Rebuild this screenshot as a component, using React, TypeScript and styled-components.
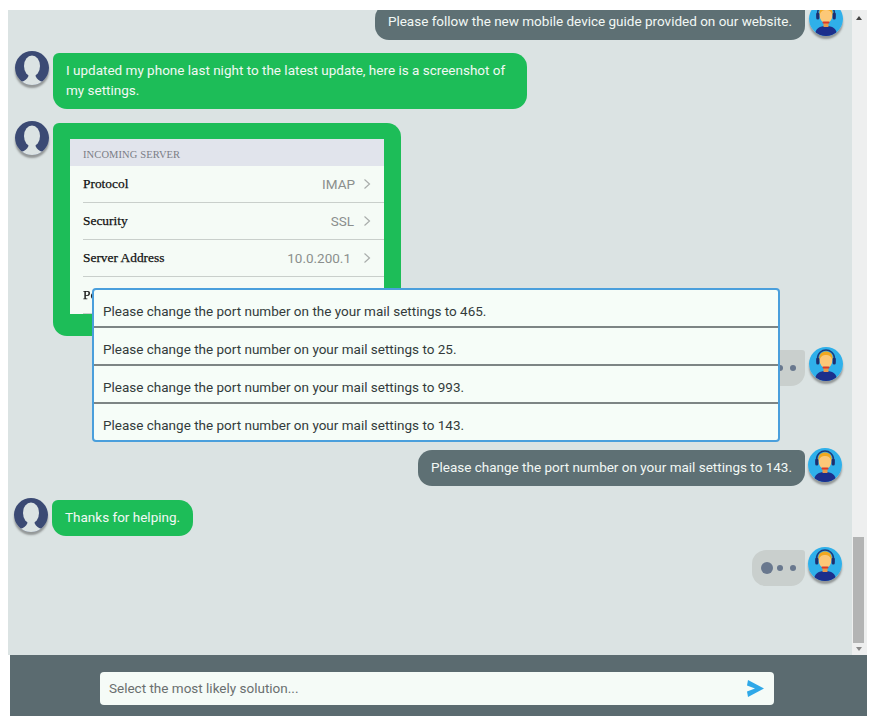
import React from "react";
import styled, { createGlobalStyle } from "styled-components";

const Global = createGlobalStyle`
  html, body { margin: 0; padding: 0; background: #fff; }
  body { font-family: Roboto, "Liberation Sans", sans-serif; }
  * { box-sizing: border-box; }
`;

const Frame = styled.div`
  width: 876px;
  height: 726px;
  padding: 10px 0 0 8px;
  overflow: hidden;
  filter: blur(0.35px);
`;

const ChatArea = styled.div`
  display: flex;
  width: 858px;
  height: 645px;
`;

const Thread = styled.div`
  position: relative;
  flex: 0 0 844px;
  height: 645px;
  background: #dbe3e3;
  overflow: hidden;
`;

const Messages = styled.div`
  display: flex;
  flex-direction: column;
  margin-top: -8px;
`;

const Row = styled.div<{ $side: "left" | "right"; $top: number; $shift?: number }>`
  display: flex;
  align-items: flex-start;
  gap: ${(p) => (p.$side === "right" && p.$shift ? 3 : 4)}px;
  flex-direction: ${(p) => (p.$side === "left" ? "row" : "row-reverse")};
  margin-top: ${(p) => p.$top}px;
  padding-left: ${(p) => 7 - (p.$shift ?? 0)}px;
  padding-right: ${(p) => 9 + (p.$shift ?? 0)}px;
`;

const AvatarWrap = styled.div`
  flex: 0 0 34px;
  width: 34px;
  height: 34px;
  border-radius: 50%;
  box-shadow: 0 3px 2px rgba(60, 60, 60, 0.45);
  line-height: 0;
`;

const Bubble = styled.div<{ $side: "left" | "right" }>`
  margin-top: 2px;
  background: ${(p) => (p.$side === "left" ? "#1dbd58" : "#5e7074")};
  color: #f2f8f4;
  font-size: 13.5px;
  line-height: 20px;
  padding: 7px 13px 9px;
  border-radius: ${(p) => (p.$side === "left" ? "6px 14px 14px 14px" : "14px 6px 14px 14px")};
`;

const TextBubble = styled(Bubble)<{ $width?: number }>`
  ${(p) => (p.$width ? `width: ${p.$width}px;` : "")}
`;

const ImageBubble = styled(Bubble)`
  width: 348px;
  height: 213px;
  padding: 16px 17px;
  border-radius: 6px 14px 14px 14px;
`;

const Settings = styled.div`
  width: 314px;
  height: 175px;
  background: #f5fbf6;
  font-family: "Liberation Serif", serif;
`;

const SettingsHeader = styled.div`
  height: 27px;
  background: #e1e4ec;
  color: #7a7d85;
  font-size: 10.5px;
  line-height: 31px;
  padding-left: 13px;
  letter-spacing: 0.1px;
`;

const SettingsRow = styled.div`
  display: flex;
  align-items: center;
  justify-content: space-between;
  height: 37px;
  margin-left: 13px;
  padding-right: 13px;
  color: #111;
  font-size: 13.4px;
  line-height: 16px;
  border-bottom: 1px solid #c9cfcb;
  -webkit-text-stroke: 0.25px #111;
`;

const SettingsValue = styled.span<{ $gap: number }>`
  display: flex;
  align-items: center;
  gap: ${(p) => p.$gap}px;
  color: #8b8f8d;
  font-family: Roboto, sans-serif;
  font-size: 13.5px;
  -webkit-text-stroke: 0;
`;

const Typing = styled.div`
  display: flex;
  align-items: center;
  width: 53px;
  height: 36px;
  margin-top: 3px;
  padding-left: 9px;
  background: #c9cfcd;
  border-radius: 14px 3px 14px 14px;
`;

const Dot = styled.span<{ $size: number; $left?: number }>`
  width: ${(p) => p.$size}px;
  height: ${(p) => p.$size}px;
  margin-left: ${(p) => p.$left ?? 0}px;
  border-radius: 50%;
  background: #69788e;
`;

const Options = styled.div`
  position: absolute;
  left: 84px;
  top: 278px;
  width: 688px;
  height: 154px;
  background: #f6fdf8;
  border: 2px solid #4a9fdc;
  border-radius: 4px;
  display: flex;
  flex-direction: column;
`;

const Option = styled.div`
  flex: 1;
  display: flex;
  align-items: center;
  padding: 5px 0 0 9px;
  font-size: 13.5px;
  color: #333b3b;
  & + & {
    border-top: 2px solid #7d8585;
  }
`;

const ScrollBar = styled.div`
  flex: 0 0 14px;
  height: 645px;
  background: #eeefef;
  display: flex;
  flex-direction: column;
  align-items: flex-start;
  padding: 6px 3px 4px 1px;
`;

const Arrow = styled.span<{ $dir: "up" | "down" }>`
  width: 0;
  height: 0;
  margin-left: 3px;
  border-left: 3px solid transparent;
  border-right: 3px solid transparent;
  ${(p) =>
    p.$dir === "up" ? "border-bottom: 4px solid #444;" : "border-top: 4px solid #888;"}
`;

const Thumb = styled.div`
  width: 11px;
  height: 106px;
  margin-top: auto;
  margin-bottom: 4px;
  background: #b3b4b4;
`;

const Footer = styled.div`
  width: 857px;
  height: 61px;
  margin-left: 2px;
  background: #5b6b70;
  padding: 17px 93px 0 90px;
`;

const InputBox = styled.div`
  display: flex;
  align-items: center;
  height: 33px;
  background: #f5fbf7;
  border-radius: 4px;
  padding: 0 10px 0 9px;
`;

const Field = styled.input`
  flex: 1;
  border: 0;
  outline: 0;
  padding: 0 0 2px;
  background: transparent;
  font-family: Roboto, sans-serif;
  font-size: 13.5px;
  color: #666;
  &::placeholder {
    color: #6a6f6f;
    opacity: 1;
  }
`;

const UserAvatar = () => (
  <AvatarWrap>
    <svg width="34" height="34" viewBox="0 0 34 34">
      <defs>
        <clipPath id="uc">
          <circle cx="17" cy="17" r="17" />
        </clipPath>
      </defs>
      <g clipPath="url(#uc)">
        <rect width="34" height="34" fill="#3b4a74" />
        <ellipse cx="17" cy="15" rx="8" ry="10.5" fill="#dbe3e3" />
        <path d="M0 34V33C6 31 13 30 14 23H20C21 30 28 31 34 33V34Z" fill="#dbe3e3" />
      </g>
    </svg>
  </AvatarWrap>
);

const AgentAvatar = () => (
  <AvatarWrap>
    <svg width="34" height="34" viewBox="0 0 34 34">
      <defs>
        <clipPath id="ac">
          <circle cx="17" cy="17" r="17" />
        </clipPath>
      </defs>
      <g clipPath="url(#ac)">
        <rect width="34" height="34" fill="#2fb0ea" />
        <path d="M6 34C6 26 11 24 17 24S28 26 28 34Z" fill="#1c2f8c" />
        <rect x="14.5" y="18" width="5" height="7" fill="#e89a4c" />
        <ellipse cx="17" cy="13" rx="6.5" ry="8" fill="#fcc878" />
        <path d="M10.5 13C9.5 6.5 13.5 4.5 17 4.5S24.5 6.5 23.5 13C22 9 20 8 17 8S12 9 10.5 13Z" fill="#f0a820" />
        <path d="M8.5 15V11.5C8.5 6 13 3 17 3S25.5 6 25.5 11.5V15" fill="none" stroke="#1c3a7b" strokeWidth="1.5" />
        <rect x="7.2" y="10.5" width="3.2" height="7" rx="1.6" fill="#1c2f70" />
        <rect x="23.6" y="10.5" width="3.2" height="7" rx="1.6" fill="#1c2f70" />
        <rect x="13.5" y="19.5" width="7" height="2" rx="1" fill="#d8392b" />
      </g>
    </svg>
  </AvatarWrap>
);

const Chevron = () => (
  <svg width="8" height="12" viewBox="0 0 8 12">
    <path d="M1.5 1.5L6.5 6L1.5 10.5" fill="none" stroke="#a9adab" strokeWidth="1.2" />
  </svg>
);

const SendIcon = () => (
  <svg width="17" height="17" viewBox="0 0 17 17">
    <path d="M1 0L17 8.5L1 17L0 11.5L8 8.5L0 5.5Z" fill="#2fa8e8" />
  </svg>
);

const settings: [string, string, number][] = [
  ["Protocol", "IMAP", 8],
  ["Security", "SSL", 9],
  ["Server Address", "10.0.200.1", 12],
];

const options = [
  "Please change the port number on the your mail settings to 465.",
  "Please change the port number on your mail settings to 25.",
  "Please change the port number on your mail settings to 993.",
  "Please change the port number on your mail settings to 143.",
];

const TypingDots = () => (
  <Typing>
    <Dot $size={12} />
    <Dot $size={6} $left={4} />
    <Dot $size={6} $left={7} />
  </Typing>
);

export default function App() {
  return (
    <>
      <Global />
      <Frame>
        <ChatArea>
          <Thread>
            <Messages>
              <Row $side="right" $top={0}>
                <AgentAvatar />
                <TextBubble $side="right">
                  Please follow the new mobile device guide provided on our website.
                </TextBubble>
              </Row>
              <Row $side="left" $top={11}>
                <UserAvatar />
                <TextBubble $side="left" $width={474}>
                  I updated my phone last night to the latest update, here is a screenshot of my settings.
                </TextBubble>
              </Row>
              <Row $side="left" $top={12}>
                <UserAvatar />
                <ImageBubble $side="left">
                  <Settings>
                    <SettingsHeader>INCOMING SERVER</SettingsHeader>
                    {settings.map(([label, value, gap]) => (
                      <SettingsRow key={label}>
                        <span>{label}</span>
                        <SettingsValue $gap={gap}>
                          {value}
                          <Chevron />
                        </SettingsValue>
                      </SettingsRow>
                    ))}
                    <SettingsRow>
                      <span>Port</span>
                    </SettingsRow>
                  </Settings>
                </ImageBubble>
              </Row>
              <Row $side="right" $top={11}>
                <AgentAvatar />
                <TypingDots />
              </Row>
              <Row $side="right" $top={62} $shift={1}>
                <AgentAvatar />
                <TextBubble $side="right">
                  Please change the port number on your mail settings to 143.
                </TextBubble>
              </Row>
              <Row $side="left" $top={12} $shift={1}>
                <UserAvatar />
                <TextBubble $side="left">Thanks for helping.</TextBubble>
              </Row>
              <Row $side="right" $top={11} $shift={1}>
                <AgentAvatar />
                <TypingDots />
              </Row>
            </Messages>
            <Options>
              {options.map((o) => (
                <Option key={o}>{o}</Option>
              ))}
            </Options>
          </Thread>
          <ScrollBar>
            <Arrow $dir="up" />
            <Thumb />
            <Arrow $dir="down" />
          </ScrollBar>
        </ChatArea>
        <Footer>
          <InputBox>
            <Field placeholder="Select the most likely solution..." />
            <SendIcon />
          </InputBox>
        </Footer>
      </Frame>
    </>
  );
}
